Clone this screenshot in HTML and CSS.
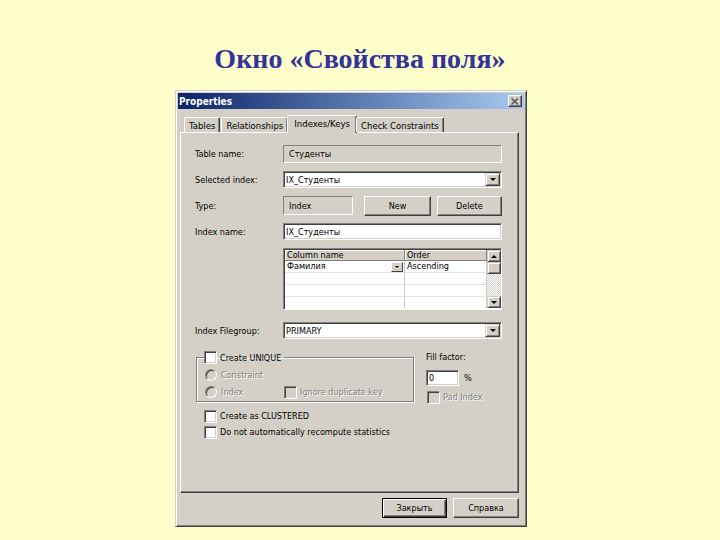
FILE: index.html
```html
<!DOCTYPE html>
<html lang="ru">
<head>
    <meta charset="UTF-8">
    <title>Окно «Свойства поля»</title>
    <link rel="stylesheet" href="styles.css">
</head>
<body>

    <h1 class="page-title">Окно «Свойства поля»</h1>

    <!-- Dialog window -->
    <div class="dialog">
        <div class="titlebar">
            <span>Properties</span>
            <span class="close-btn">
                <svg width="8" height="7" viewBox="0 0 8 7"><path d="M0.5 0.5L7 6.5M7 0.5L0.5 6.5" stroke="#505050" stroke-width="1.4"/></svg>
            </span>
        </div>

        <div class="dialog-body">
            <div class="tabs">
                <span class="tab">Tables</span>
                <span class="tab">Relationships</span>
                <span class="tab active">Indexes/Keys</span>
                <span class="tab">Check Constraints</span>
            </div>

            <div class="panel">
                <div class="form-row row-first">
                    <span>Table name:</span>
                    <div class="field readonly">Студенты</div>
                </div>
                <div class="form-row row-combo">
                    <span>Selected index:</span>
                    <div class="field combo">IX_Студенты<span class="drop-btn"><i class="arrow"></i></span></div>
                </div>
                <div class="form-row row-type">
                    <span>Type:</span>
                    <div class="type-fields">
                        <div class="field readonly type-box">Index</div>
                        <button class="btn btn-new">New</button>
                        <button class="btn btn-delete">Delete</button>
                    </div>
                </div>
                <div class="form-row row-name">
                    <span>Index name:</span>
                    <div class="field">IX_Студенты</div>
                </div>
                <div class="form-row row-grid">
                    <span></span>
                    <div class="grid">
                        <div class="cell head">Column name</div>
                        <div class="cell head">Order</div>
                        <div class="scrollbar">
                            <span class="sb-btn"><i class="arrow up"></i></span>
                            <span class="sb-thumb"></span>
                            <span class="sb-track"></span>
                            <span class="sb-btn"><i class="arrow"></i></span>
                        </div>
                        <div class="cell name-cell">Фамилия<span class="cell-drop"><i class="arrow small"></i></span></div>
                        <div class="cell">Ascending</div>
                        <div class="cell"></div>
                        <div class="cell"></div>
                        <div class="cell"></div>
                        <div class="cell"></div>
                        <div class="cell last"></div>
                        <div class="cell last"></div>
                    </div>
                </div>
                <div class="form-row row-filegroup">
                    <span>Index Filegroup:</span>
                    <div class="field combo">PRIMARY<span class="drop-btn"><i class="arrow"></i></span></div>
                </div>

                <div class="options">
                    <fieldset class="unique-group">
                        <legend><span class="check"></span>Create UNIQUE</legend>
                        <div class="opt disabled"><span class="radio"></span>Constraint</div>
                        <div class="opt-line">
                            <div class="opt disabled opt-index"><span class="radio"></span>Index</div>
                            <div class="opt disabled"><span class="check dis"></span>Ignore duplicate key</div>
                        </div>
                    </fieldset>
                    <div class="fill">
                        <div class="fill-label">Fill factor:</div>
                        <div class="fill-row">
                            <div class="field fill-input">0</div>
                            <span class="percent">%</span>
                        </div>
                        <div class="opt disabled pad-index"><span class="check dis"></span>Pad Index</div>
                    </div>
                </div>

                <div class="opt opt-clustered"><span class="check"></span>Create as CLUSTERED</div>
                <div class="opt opt-stats"><span class="check"></span>Do not automatically recompute statistics</div>
            </div>

            <div class="footer">
                <button class="btn btn-default">Закрыть</button>
                <button class="btn btn-help">Справка</button>
            </div>
        </div>
    </div>

</body>
</html>
```

FILE: styles.css
```css
/* Page */
body {
    margin: 0;
    background: #FFFFCC;
    font-family: "DejaVu Sans Condensed", "Liberation Sans", sans-serif;
    font-size: 9px;
    color: #000;
}

.page-title {
    margin: 0;
    padding-top: 43px;
    height: 47px;
    font: bold 28px/32px "Liberation Serif", serif;
    color: #333399;
    text-align: center;
}

/* Dialog frame */
.dialog {
    box-sizing: border-box;
    width: 352px;
    height: 437px;
    margin-left: 175px;
    padding: 2px;
    background: #D4D0C8;
    border: 1px solid;
    border-color: #D4D0C8 #404040 #404040 #D4D0C8;
    box-shadow: inset 1px 1px #fff, inset -1px -1px #808080;
    display: flex;
    flex-direction: column;
}

.titlebar {
    height: 16px;
    padding: 0 2px 0 1px;
    background: linear-gradient(to right, #0A246A, #A6CAF0);
    color: #fff;
    font-weight: bold;
    font-size: 10px;
    display: flex;
    align-items: center;
    justify-content: space-between;
}

.close-btn {
    box-sizing: border-box;
    width: 14px;
    height: 12px;
    background: #D4D0C8;
    border: 1px solid;
    border-color: #fff #404040 #404040 #fff;
    box-shadow: inset -1px -1px #808080;
    display: flex;
    align-items: center;
    justify-content: center;
}

.dialog-body {
    flex: 1;
    padding: 6px 5px 6px 2px;
    display: flex;
    flex-direction: column;
}

/* Tabs */
.tabs {
    height: 18px;
    margin-bottom: -1px;
    padding-left: 4px;
    display: flex;
    position: relative;
    z-index: 1;
    font-size: 9.5px;
}

.tab {
    box-sizing: border-box;
    height: 15px;
    margin: 2px 1px 0 0;
    padding: 0 4px;
    border: 1px solid;
    border-bottom: none;
    border-color: #fff #404040 #fff #fff;
    border-radius: 2px 2px 0 0;
    box-shadow: inset -1px 0 #808080;
    display: flex;
    align-items: center;
    background: #D4D0C8;
}

.tab.active {
    height: 18px;
    margin: 0 -1px 0 -2px;
    padding: 0 6px 2px 6px;
}

.panel {
    flex: 1;
    padding: 12px 16px 0 14px;
    background: #D4D0C8;
    border: 1px solid;
    border-color: #fff #404040 #404040 #fff;
    box-shadow: inset -1px -1px #808080;
}

/* Form rows */
.form-row {
    display: grid;
    grid-template-columns: 88px 219px;
    align-items: center;
}

.row-first { height: 18px; }
.row-combo { height: 17px; margin-top: 8px; }
.row-type { height: 20px; margin-top: 8px; }
.row-name { height: 17px; margin-top: 7px; }
.row-grid { height: 62px; margin-top: 8px; }
.row-filegroup { height: 17px; margin-top: 12px; }

.field {
    box-sizing: border-box;
    height: 100%;
    padding: 0 2px;
    background: #fff;
    border: 1px solid;
    border-color: #808080 #fff #fff #808080;
    box-shadow: inset 1px 1px #404040, inset -1px -1px #D4D0C8;
    display: flex;
    align-items: center;
}

.field.readonly {
    padding-left: 5px;
    background: #D4D0C8;
    box-shadow: none;
}

.combo {
    padding-right: 1px;
}

.drop-btn {
    box-sizing: border-box;
    width: 15px;
    height: 13px;
    margin-left: auto;
    background: #D4D0C8;
    border: 1px solid;
    border-color: #D4D0C8 #404040 #404040 #D4D0C8;
    box-shadow: inset 1px 1px #fff, inset -1px -1px #808080;
    display: flex;
    align-items: center;
    justify-content: center;
}

.arrow {
    width: 0;
    height: 0;
    border-left: 3px solid transparent;
    border-right: 3px solid transparent;
    border-top: 3px solid #000;
}

.arrow.up {
    border-top: none;
    border-bottom: 3px solid #000;
}

.arrow.small {
    border-left-width: 2px;
    border-right-width: 2px;
    border-top-width: 2px;
}

.type-fields {
    height: 100%;
    display: flex;
}

.type-box {
    width: 71px;
    height: 19px;
}

/* Buttons */
.btn {
    box-sizing: border-box;
    padding: 0;
    font: inherit;
    color: #000;
    background: #D4D0C8;
    border: 1px solid;
    border-color: #fff #404040 #404040 #fff;
    box-shadow: inset -1px -1px #808080;
}

.btn-new { width: 67px; margin-left: 11px; }
.btn-delete { width: 66px; margin-left: 6px; }

/* Columns grid */
.grid {
    box-sizing: border-box;
    height: 62px;
    border: 1px solid;
    border-color: #808080 #fff #fff #808080;
    box-shadow: inset 1px 1px #404040;
    padding: 1px 0 0 1px;
    background: #fff;
    display: grid;
    grid-template-columns: 120px 82px 14px;
    grid-template-rows: 11px 12px 12px 12px 11px;
}

.cell {
    box-sizing: border-box;
    padding-left: 2px;
    border-right: 1px solid #C8C8C8;
    border-bottom: 1px solid #E4E4E4;
    display: flex;
    align-items: center;
    line-height: 1;
}

.cell.head {
    background: #D4D0C8;
    border-right-color: #808080;
    border-bottom-color: #808080;
    box-shadow: inset 1px 1px #fff;
}

.cell.last {
    border-bottom: none;
}

.name-cell {
    justify-content: space-between;
    padding-right: 1px;
}

.cell-drop {
    box-sizing: border-box;
    width: 12px;
    height: 10px;
    background: #D4D0C8;
    border: 1px solid;
    border-color: #fff #404040 #404040 #fff;
    display: flex;
    align-items: center;
    justify-content: center;
}

.scrollbar {
    grid-column: 3;
    grid-row: 1 / -1;
    display: flex;
    flex-direction: column;
}

.sb-btn,
.sb-thumb {
    box-sizing: border-box;
    height: 12px;
    background: #D4D0C8;
    border: 1px solid;
    border-color: #D4D0C8 #404040 #404040 #D4D0C8;
    box-shadow: inset 1px 1px #fff, inset -1px -1px #808080;
    display: flex;
    align-items: center;
    justify-content: center;
}

.sb-track {
    flex: 1;
    background: repeating-conic-gradient(#fff 0 25%, #D4D0C8 0 50%) 0 0 / 2px 2px;
}

/* Options */
.options {
    margin-top: 12px;
    display: flex;
    align-items: flex-start;
}

.unique-group {
    box-sizing: border-box;
    width: 218px;
    margin: 0 0 0 1px;
    padding: 5px 0 3px 8px;
    border: 1px solid #808080;
    box-shadow: inset 1px 1px #fff, 1px 1px #fff;
}

.unique-group legend {
    margin-left: -1px;
    padding: 0 3px 0 0;
    display: flex;
    align-items: center;
    gap: 3px;
}

.opt {
    height: 12px;
    display: flex;
    align-items: center;
    gap: 4px;
    white-space: nowrap;
}

.opt .check {
    margin-right: -1px;
}

.opt-line {
    margin-top: 5px;
    display: flex;
}

.opt-index {
    width: 79px;
}

.disabled {
    color: #808080;
    text-shadow: 1px 1px 0 #fff;
}

.check {
    box-sizing: border-box;
    width: 13px;
    height: 13px;
    flex: none;
    background: #fff;
    border: 1px solid;
    border-color: #808080 #fff #fff #808080;
    box-shadow: inset 1px 1px #404040, inset -1px -1px #D4D0C8;
}

.check.dis {
    background: #D4D0C8;
}

.radio {
    box-sizing: border-box;
    width: 12px;
    height: 12px;
    flex: none;
    border-radius: 50%;
    background: #D4D0C8;
    border: 1px solid;
    border-color: #808080 #fff #fff #808080;
    box-shadow: inset 1px 1px #404040;
}

.fill {
    margin-left: 12px;
}

.fill-label {
    height: 12px;
    line-height: 12px;
}

.fill-row {
    margin-top: 7px;
    display: flex;
    align-items: center;
}

.fill-input {
    width: 33px;
    height: 16px;
}

.percent {
    margin-left: 5px;
}

.pad-index {
    margin-top: 5px;
    margin-left: 1px;
}

.opt-clustered {
    margin-top: 7px;
    padding-left: 9px;
}

.opt-stats {
    margin-top: 4px;
    padding-left: 9px;
}

/* Footer buttons */
.footer {
    height: 20px;
    margin-top: 5px;
    display: flex;
    justify-content: flex-end;
    gap: 6px;
}

.btn-default {
    width: 65px;
    border-color: #000;
    box-shadow: inset 1px 1px #fff, inset -1px -1px #404040, inset -2px -2px #808080;
}

.btn-help {
    width: 66px;
}
```
